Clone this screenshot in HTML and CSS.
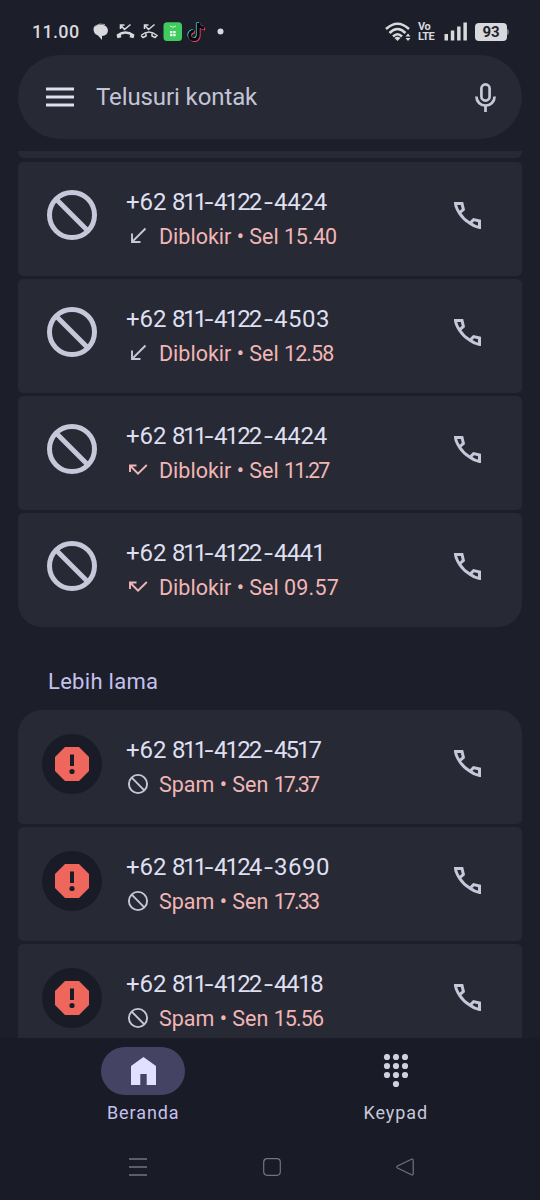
FILE: index.html
```html
<!DOCTYPE html>
<html lang="id">
<head>
<meta charset="utf-8">
<title>Telepon</title>
<link rel="stylesheet" href="styles.css">
</head>
<body>
<svg class="defs" aria-hidden="true">
  <symbol id="phone" viewBox="0 0 27 27"><path d="M1.500 1.500H8L9.400 7.400L5.400 11Q1.800 5.500 1.500 1.500ZM25.500 25.500V19L19.600 17.600L16 21.300Q20.500 24.800 25.500 25.500ZM5.400 11Q9.500 17.500 16 21.300" fill="none" stroke="currentColor" stroke-width="3"/></symbol>
  <symbol id="ban" viewBox="0 0 50 50"><circle cx="25" cy="25" r="22.500" fill="none" stroke="currentColor" stroke-width="5"/><path d="M9.500 9.500L40.500 40.500" stroke="currentColor" stroke-width="5"/></symbol>
  <symbol id="ban-small" viewBox="0 0 22 22"><circle cx="11" cy="11" r="9.100" fill="none" stroke="currentColor" stroke-width="1.900"/><path d="M4.700 4.700L17.300 17.300" stroke="currentColor" stroke-width="1.900"/></symbol>
  <symbol id="incoming" viewBox="0 0 22 22"><path d="M18.500 3.500L5 17M5 8.500V17H13.500" fill="none" stroke="currentColor" stroke-width="1.900"/></symbol>
  <symbol id="missed" viewBox="0 0 22 22"><path d="M3 13V6.500H9.500M3 6.500L11 14.700L19.800 6" fill="none" stroke="currentColor" stroke-width="1.900"/></symbol>
  <symbol id="spam" viewBox="0 0 60 60"><circle cx="30" cy="30" r="30" fill="#191b26"/><path d="M23 13H37L47 23V37L37 47H23L13 37V23Z" fill="#ef665c"/><path d="M28 20.500H32V32H28Z" fill="#191b26"/><circle cx="30" cy="37.500" r="2.600" fill="#191b26"/></symbol>
</svg>
<div class="screen">
  <header class="status">
    <span class="clock">11.00</span>
    <svg class="notices" viewBox="0 0 134 24" width="134" height="24">
      <path d="M.500 9Q.500 5 6 4.500Q14.500 4 15 10.500Q14.500 15.500 9 16V20L5 15.500Q.500 14 .500 9Z" fill="#d8d8dd"/><path d="M2 6.500Q6 2.500 12 4.500" stroke="#a5a6ad" fill="none"/>
      <g stroke="#d8d8dd" fill="none" stroke-width="1.600"><path d="M27.500 9V5H31.500M27.500 5L31.500 9.500L37.500 4.500"/><path d="M24.500 15.500Q32.500 9.500 40.500 15.500" stroke-width="2.400"/><path d="M24 16.500L28 15.500M37 15.500L41 16.500" stroke-width="3.600"/></g>
      <g stroke="#d8d8dd" fill="none" stroke-width="1.500"><path d="M51.500 9V5H55.500M51.500 5L55.500 9.500L61.500 4.500"/><path d="M48 15.500Q56 8.500 64 15.500L62 17.500L59 16V13.500M48 15.500L50 17.500L53 16V13.500"/></g>
      <rect x="70.500" y="2.200" width="18.500" height="18.800" rx="3.500" fill="#3fcb5e"/><path d="M77 6Q80 8.500 83 6" stroke="#c8f8d0" fill="none"/><path d="M77 11H79.400V13.200H77ZM80.200 11H82.600V13.200H80.200ZM77 14H79.400V16.200H77ZM80.200 14H82.600V16.200H80.200Z" fill="#f1fff3"/>
      <g fill="none" stroke-width="3" transform="translate(1.200 0)"><path d="M104 3V15A4.300 4.300 0 1 1 99.700 11M104 3Q105 7.500 110 8" stroke="#35d5d8" transform="translate(-.8 -.6)"/><path d="M104 3V15A4.300 4.300 0 1 1 99.700 11M104 3Q105 7.500 110 8" stroke="#ee4265" transform="translate(.9 .9)"/><path d="M104 3V15A4.300 4.300 0 1 1 99.700 11M104 3Q105 7.500 110 8" stroke="#08080c"/></g>
      <circle cx="127.500" cy="11.600" r="3" fill="#d8d8dd"/>
    </svg>
    <div class="network">
      <svg width="27" height="20" viewBox="0 0 27 20"><g fill="none" stroke="#d8d8dd" stroke-width="2.500"><path d="M1 7Q12.500-3.500 24 7"/><path d="M4.500 11Q12.500 3 20.500 11"/><path d="M8 14.500Q12.500 10 17 14.500"/></g><path d="M9.500 16Q12.500 13.500 15.500 16L12.500 19Z" fill="#d8d8dd"/><path d="M20.500 14.500L23 11.500L25.500 14.500ZM20.500 16H25.500L23 19Z" fill="#d8d8dd"/></svg>
      <span class="volte"><span>Vo</span><span>LTE</span></span>
      <svg width="24" height="19" viewBox="0 0 24 19"><path d="M.5 12H4V18.500H.500ZM6.800 8.500H10.300V18.500H6.800ZM13.100 4.500H16.600V18.500H13.100ZM19.400.5H22.900V18.500H19.400Z" fill="#d8d8dd"/></svg>
      <span class="battery">93</span><i class="nub"></i>
    </div>
  </header>
  <div class="search">
    <svg width="28" height="20"><path d="M0 2H28M0 10H28M0 18H28" stroke="#dedff0" stroke-width="3"/></svg>
    <span>Telusuri kontak</span>
    <svg width="21" height="29" viewBox="0 0 21 29"><g fill="none" stroke="#c6c8da" stroke-width="2.700"><rect x="6.400" y="1.400" width="8.200" height="16.200" rx="4.100"/><path d="M1.400 13.500A9.100 9.100 0 0 0 19.600 13.500M10.500 22.500V29"/></g></svg>
  </div>

  <main class="log">
    <div class="previous"></div>
    <section class="group recent">
      <article class="row">
        <svg class="avatar ban"><use href="#ban"/></svg>
        <div class="info">
          <div class="number"><span>+62 </span><span class="prefix">811</span><span class="dash">-</span><span class="mid">4122</span><span class="dash">-</span><span class="t0">4424</span></div>
          <div class="meta"><svg class="in"><use href="#incoming"/></svg><span>Diblokir • Sel <span class="w0">15.40</span></span></div>
        </div>
        <svg class="call"><use href="#phone"/></svg>
      </article>
      <article class="row">
        <svg class="avatar ban"><use href="#ban"/></svg>
        <div class="info">
          <div class="number"><span>+62 </span><span class="prefix">811</span><span class="dash">-</span><span class="mid">4122</span><span class="dash">-</span><span class="t-wide">4503</span></div>
          <div class="meta"><svg class="in"><use href="#incoming"/></svg><span>Diblokir • Sel <span class="w-snug">12.58</span></span></div>
        </div>
        <svg class="call"><use href="#phone"/></svg>
      </article>
      <article class="row">
        <svg class="avatar ban"><use href="#ban"/></svg>
        <div class="info">
          <div class="number"><span>+62 </span><span class="prefix">811</span><span class="dash">-</span><span class="mid">4122</span><span class="dash">-</span><span class="t0">4424</span></div>
          <div class="meta"><svg><use href="#missed"/></svg><span>Diblokir • Sel <span class="w-tight">11.27</span></span></div>
        </div>
        <svg class="call"><use href="#phone"/></svg>
      </article>
      <article class="row">
        <svg class="avatar ban"><use href="#ban"/></svg>
        <div class="info">
          <div class="number"><span>+62 </span><span class="prefix">811</span><span class="dash">-</span><span class="mid">4122</span><span class="dash">-</span><span class="t-less">4441</span></div>
          <div class="meta"><svg><use href="#missed"/></svg><span>Diblokir • Sel <span class="w-wide">09.57</span></span></div>
        </div>
        <svg class="call"><use href="#phone"/></svg>
      </article>
    </section>
    <h2>Lebih lama</h2>
    <section class="group older">
      <article class="row">
        <svg class="avatar"><use href="#spam"/></svg>
        <div class="info">
          <div class="number"><span>+62 </span><span class="prefix">811</span><span class="dash">-</span><span class="mid">4122</span><span class="dash">-</span><span class="t-tight">4517</span></div>
          <div class="meta"><svg class="in"><use href="#ban-small"/></svg><span>Spam • Sen <span class="w-tight">17.37</span></span></div>
        </div>
        <svg class="call"><use href="#phone"/></svg>
      </article>
      <article class="row">
        <svg class="avatar"><use href="#spam"/></svg>
        <div class="info">
          <div class="number"><span>+62 </span><span class="prefix">811</span><span class="dash">-</span><span class="mid">4124</span><span class="dash">-</span><span class="t-wide">3690</span></div>
          <div class="meta"><svg class="in"><use href="#ban-small"/></svg><span>Spam • Sen <span class="w-tight">17.33</span></span></div>
        </div>
        <svg class="call"><use href="#phone"/></svg>
      </article>
      <article class="row">
        <svg class="avatar"><use href="#spam"/></svg>
        <div class="info">
          <div class="number"><span>+62 </span><span class="prefix">811</span><span class="dash">-</span><span class="mid">4122</span><span class="dash">-</span><span class="t-snug">4418</span></div>
          <div class="meta"><svg class="in"><use href="#ban-small"/></svg><span>Spam • Sen <span class="w-snug">15.56</span></span></div>
        </div>
        <svg class="call"><use href="#phone"/></svg>
      </article>
    </section>
  </main>

  <nav class="tabs">
    <div class="tab active"><span class="pill"><svg width="25" height="28" viewBox="0 0 25 28"><path d="M12.500 0L25 9V28H15.700V17H9.300V28H0V9Z" fill="#e3dfff"/></svg></span><span>Beranda</span></div>
    <div class="tab keypad"><span class="pill"><svg width="26" height="34" viewBox="0 0 26 34"><g fill="#d0d1e0"><circle cx="4" cy="3" r="3.100"/><circle cx="13" cy="3" r="3.100"/><circle cx="22" cy="3" r="3.100"/><circle cx="4" cy="12" r="3.100"/><circle cx="13" cy="12" r="3.100"/><circle cx="22" cy="12" r="3.100"/><circle cx="4" cy="21" r="3.100"/><circle cx="13" cy="21" r="3.100"/><circle cx="22" cy="21" r="3.100"/><circle cx="13" cy="30" r="3.100"/></g></svg></span><span>Keypad</span></div>
  </nav>
  <footer class="system">
    <svg width="18" height="18"><path d="M0 1H18M0 9H18M0 17H18" stroke="#72747d" stroke-width="1.300"/></svg>
    <svg width="18" height="18"><rect x=".7" y=".7" width="16.600" height="16.600" rx="3.500" fill="none" stroke="#72747d" stroke-width="1.200"/></svg>
    <svg width="18" height="18"><path d="M15.500 1.200Q17.200.5 17.200 2.500V15.500Q17.200 17.500 15.500 16.800L1.500 10Q0 9 1.500 8Z" fill="none" stroke="#72747d" stroke-width="1.200"/></svg>
  </footer>
</div>
</body>
</html>
```
FILE: styles.css
```css
* { box-sizing: border-box; }
body { margin: 0; background: #1c1e29; color: #dedff0; font-family: Roboto, sans-serif; }
svg { display: block; flex: none; }
.defs { display: none; }
.screen { width: 540px; height: 1200px; display: flex; flex-direction: column; overflow: hidden; }
.status { height: 55px; flex: none; padding: 20px 31px 0 32px; display: flex; align-items: flex-start; color: #d8d8dd; }
.clock { width: 61px; font-size: 18px; line-height: 23px; font-weight: 500; letter-spacing: .3px; }
.network { margin-left: auto; padding-top: 2px; display: flex; align-items: flex-start; }
.volte { width: 17px; height: 20px; margin: 0 9px 0 6px; display: flex; flex-direction: column; font-size: 11px; line-height: 10px; font-weight: 700; letter-spacing: -.5px; }
.battery { width: 32px; height: 18px; margin: 1px 0 0 7px; border-radius: 4px; background: #d8d8dd; color: #20222c; font-size: 15px; line-height: 18px; font-weight: 700; text-align: center; }
.nub { width: 2px; height: 6px; margin-top: 7px; background: #6b6c75; border-radius: 0 2px 2px 0; }
.search { height: 84px; flex: none; margin: 0 18px; padding: 0 26px 0 28px; display: flex; align-items: center; border-radius: 42px; background: #272934; color: #c3c5d6; font-size: 24px; line-height: 28px; }
.search span { flex: 1; margin-left: 22px; letter-spacing: -.1px; }
.log { height: 887px; flex: none; margin-top: 12px; padding: 0 18px; overflow: hidden; }
.previous { height: 7px; background: #272934; border-radius: 0 0 6px 6px; }
.group { display: flex; flex-direction: column; gap: 3px; }
.recent { margin-top: 4px; }
.row { height: 114px; flex: none; display: flex; align-items: flex-start; padding: 24px 41px 0 24px; background: #272934; border-radius: 5px; }
.recent .row:last-child { border-radius: 5px 5px 24px 24px; }
.older .row:first-child { border-radius: 24px 24px 5px 5px; }
.avatar { width: 60px; height: 60px; color: #c6c8da; }
.avatar.ban { padding: 5px; }
.recent .avatar { margin-top: -1px; }
.info { flex: 1; margin-left: 24px; padding-top: 2px; }
.number { display: grid; grid-template-columns: 46px 32px 10px 49px 11px auto; font-size: 24px; line-height: 28px; white-space: pre; }
.prefix { letter-spacing: -2.600px; }
.mid { letter-spacing: -1.900px; }
.dash { transform: scaleX(1.350); transform-origin: 50% 50%; text-align: center; }
.t0 { letter-spacing: -.2px; }
.t-wide { letter-spacing: .5px; }
.t-less { letter-spacing: -.7px; }
.t-snug { letter-spacing: -1.400px; }
.t-tight { letter-spacing: -2px; }
.meta { height: 25px; margin-top: 7px; display: flex; align-items: center; gap: 9px; color: #f0b6b5; font-size: 21.500px; line-height: 25px; white-space: pre; }
.meta > span { padding: 2px 0 0 1px; }
.meta svg { width: 22px; height: 22px; margin-left: 1px; }
.meta .in { color: #c6c8da; }
.w0 { letter-spacing: -.2px; }
.w-wide { letter-spacing: .2px; }
.w-snug { letter-spacing: -.9px; }
.w-tight { letter-spacing: -1.900px; }
.call { width: 27px; height: 27px; margin-top: 16px; color: #c6c8da; }
h2 { height: 83px; margin: 0 0 0 30px; padding-top: 41px; color: #c5c1ed; font-size: 22px; line-height: 28px; font-weight: 400; letter-spacing: .3px; }
.tabs { height: 102px; flex: none; padding: 9px 18px 0 17px; display: grid; grid-template-columns: 1fr 1fr; background: #191b26; }
.tab { display: flex; flex-direction: column; align-items: center; gap: 6px; color: #c6c8da; font-size: 18px; line-height: 24px; letter-spacing: .9px; }
.active { color: #c5c1ed; }
.pill { width: 84px; height: 48px; display: grid; place-items: center; border-radius: 24px; }
.active .pill { background: #454363; }
.system { height: 60px; flex: none; padding: 18px 126px 0 129px; display: flex; justify-content: space-between; background: #191b26; }
```
